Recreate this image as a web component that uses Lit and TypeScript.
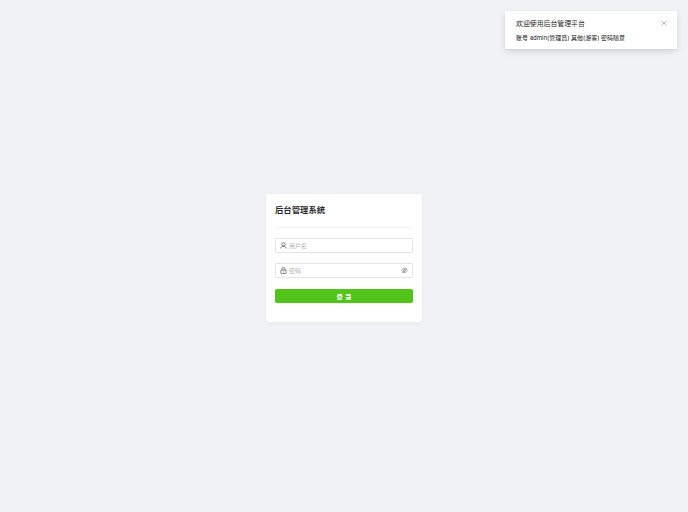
import { LitElement, html, css } from "lit";
import { customElement } from "lit/decorators.js";

@customElement("app-root")
export class AppRoot extends LitElement {
  static styles = css`
    :host {
      display: block;
      position: relative;
      width: 688px;
      height: 512px;
      overflow: hidden;
      background: #f0f2f5;
      font-family: "Inter", "Noto Sans CJK SC", "Liberation Sans", sans-serif;
    }
    .page {
      height: 512px;
      display: flex;
      align-items: center;
      justify-content: center;
    }
    .card {
      width: 156px;
      height: 128px;
      box-sizing: border-box;
      margin-top: 4px;
      padding: 9px 9px 0;
      background: #fff;
      border-radius: 3px;
      box-shadow: 0 1px 4px rgba(0, 0, 0, 0.05);
      display: flex;
      flex-direction: column;
    }
    .title {
      height: 14px;
      font-size: 8.4px;
      line-height: 14px;
      font-weight: 600;
      color: rgba(0, 0, 0, 0.85);
    }
    .divider {
      height: 1px;
      margin-top: 10px;
      background: #f3f3f3;
    }
    .field {
      height: 15px;
      box-sizing: border-box;
      margin-top: 10px;
      padding: 0 4px;
      display: flex;
      align-items: center;
      gap: 2px;
      background: #fff;
      border: 1px solid #e4e4e4;
      border-radius: 2px;
      font-size: 6px;
      color: #b5b5b5;
    }
    .field svg {
      width: 7px;
      height: 7px;
      flex: none;
      color: rgba(0, 0, 0, 0.7);
    }
    .field span {
      flex: 1;
    }
    .field svg.eye {
      color: rgba(0, 0, 0, 0.45);
    }
    .btn {
      height: 14px;
      margin-top: 11px;
      display: flex;
      align-items: center;
      justify-content: center;
      background: #52c41a;
      border-radius: 2px;
      color: #fff;
      font-size: 6.2px;
      font-weight: 600;
      word-spacing: 1px;
      box-shadow: 0 1px 0 rgba(0, 0, 0, 0.04);
    }
    .notice {
      position: absolute;
      left: 505px;
      top: 11px;
      width: 172px;
      height: 38px;
      box-sizing: border-box;
      padding: 7px 11px;
      background: #fff;
      border-radius: 1px;
      box-shadow: 0 3px 7px rgba(0, 0, 0, 0.1), 0 1px 3px rgba(0, 0, 0, 0.06);
    }
    .notice-title {
      font-size: 6.9px;
      line-height: 11px;
      color: rgba(0, 0, 0, 0.9);
    }
    .notice-body {
      margin-top: 4px;
      font-size: 6px;
      line-height: 10px;
      color: rgba(0, 0, 0, 0.95);
      white-space: nowrap;
    }
    .close {
      position: absolute;
      right: 10px;
      top: 9px;
      width: 6px;
      height: 6px;
      color: rgba(0, 0, 0, 0.45);
    }
  `;

  render() {
    return html`
      <div class="page">
        <div class="card">
          <div class="title">后台管理系统</div>
          <div class="divider"></div>
          <div class="field">
            <svg viewBox="0 0 16 16" fill="none" stroke="currentColor" stroke-width="1.5">
              <circle cx="8" cy="5.5" r="4" />
              <path d="M1.5 15c.4-3.6 3-5.5 6.5-5.5s6.1 1.900 6.500 5.500" />
            </svg>
            <span>用户名</span>
          </div>
          <div class="field">
            <svg viewBox="0 0 16 16" fill="none" stroke="currentColor" stroke-width="1.500">
              <rect x="2" y="7" width="12" height="8" rx="1" />
              <path d="M4.500 7V4.500a3.500 3.500 0 0 1 7 0V7M8 10v2.500" />
            </svg>
            <span>密码</span>
            <svg class="eye" viewBox="0 0 16 16" fill="none" stroke="currentColor" stroke-width="1.500">
              <path d="M1 8c1.800-3.200 4.200-4.800 7-4.800S13.200 4.800 15 8c-1.800 3.200-4.200 4.800-7 4.800S2.800 11.200 1 8z" />
              <circle cx="8" cy="8" r="2.300" />
              <path d="M2.500 14L13.500 2" />
            </svg>
          </div>
          <div class="btn">登 录</div>
        </div>
      </div>
      <div class="notice">
        <div class="notice-title">欢迎使用后台管理平台</div>
        <div class="notice-body">账号 admin(管理员) 其他(游客) 密码随意</div>
        <svg class="close" viewBox="0 0 6 6" fill="none" stroke="currentColor" stroke-width="0.6">
          <path d="M.5.5l5 5M5.500.5l-5 5" />
        </svg>
      </div>
    `;
  }
}
